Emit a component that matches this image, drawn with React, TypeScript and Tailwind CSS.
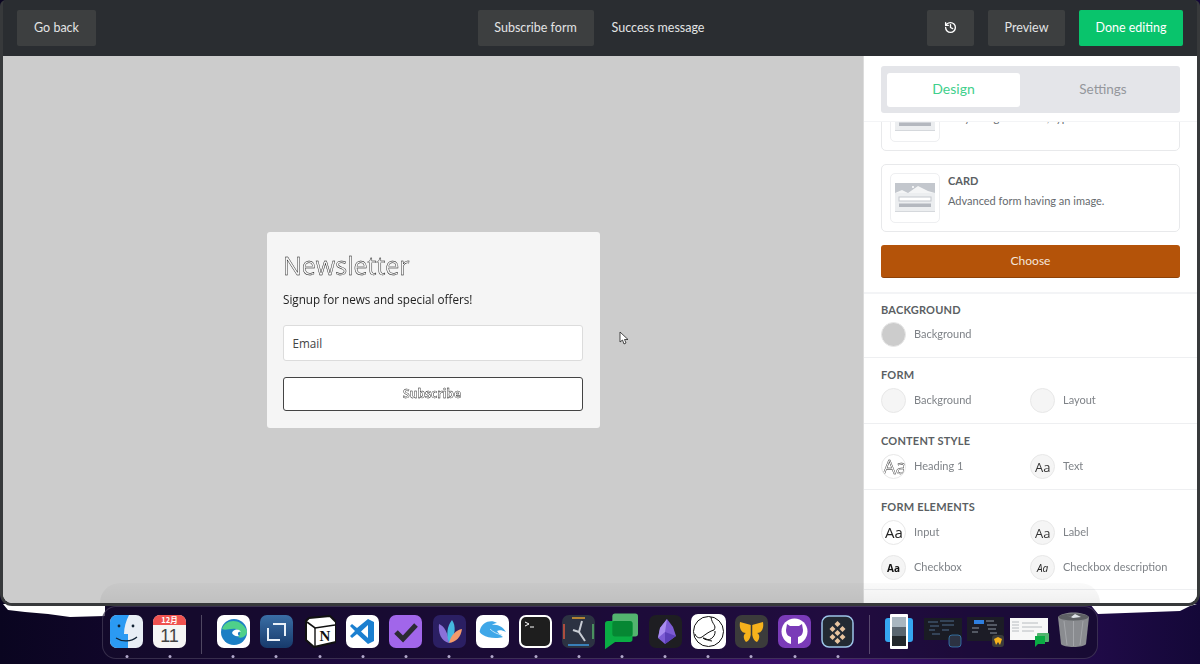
import React from 'react';
import { History } from 'lucide-react';

const SANS = "font-['Lato','Liberation_Sans',sans-serif]";
const OPEN = "font-['Open_Sans','Liberation_Sans',sans-serif]";

const CardThumb: React.FC = () => (
    <div className="w-[50px] h-[50px] shrink-0 rounded-[5px] border border-[#eeeff1] bg-white flex items-center justify-center">
        <svg width="40" height="30" viewBox="0 0 40 30">
            <rect width="40" height="28" fill="#eceef0" />
            <path d="M0 0h40v10H0z" fill="#c3c7cd" />
            <path d="M0 10l7-3 6 3 10-7 10 5 7 2z" fill="#f4f5f6" />
            <circle cx="18" cy="4" r="1" fill="#fff" />
            <rect x="4" y="14" width="32" height="4" fill="#fff" stroke="#c3c7cd" />
            <rect x="4" y="20.5" width="32" height="3.5" fill="#b4b8bf" />
            <rect y="28" width="40" height="1" fill="#d5d8dc" />
        </svg>
    </div>
);

const Swatch: React.FC<{ label: string; className?: string; children?: React.ReactNode }> = ({ label, className, children }) => (
    <div className="flex items-start gap-2 h-[25px]">
        <div className={`w-[25px] h-[25px] shrink-0 rounded-full border border-[#e8e8e8] flex items-center justify-center overflow-hidden ${className ?? 'bg-[#f5f5f5]'}`}>
            {children}
        </div>
        <span className="text-[11px] leading-[23px] text-[#7f8388] whitespace-nowrap [will-change:transform]">{label}</span>
    </div>
);

const Aa: React.FC<{ className: string }> = ({ className }) => (
    <span className={`${OPEN} [will-change:transform] ${className}`}>Aa</span>
);

const Section: React.FC<{ title: string; className?: string; children: React.ReactNode }> = ({ title, className, children }) => (
    <section className={`shrink-0 border-b border-[#eeeff1] px-[17px] ${className ?? 'h-[66px] pt-[10px]'}`}>
        <h3 className="text-[11px] leading-[14px] font-bold text-[#5b5f63] tracking-[0.2px] mb-[6px]">{title}</h3>
        {children}
    </section>
);

const SidePanel: React.FC = () => (
    <aside className={`w-[333px] shrink-0 bg-white flex flex-col overflow-hidden ${SANS}`}>
        <div className="relative z-10 h-[66px] shrink-0 bg-white px-[17px] pt-[10px] border-b border-[#f3f4f6]">
            <div className="h-[47px] rounded-[3px] bg-[#e4e5e9] p-[6px] flex">
                <button className="w-[133px] h-[34px] mt-[1px] pb-[3px] rounded-[3px] bg-white text-[14px] text-[#3fd08c]">Design</button>
                <button className="flex-1 h-[34px] mt-[1px] pb-[2px] pl-[12px] text-[13.5px] text-[#94979c]">Settings</button>
            </div>
        </div>

        <div className="flex-1 overflow-hidden">
            {/* scrolled part of the layout picker */}
            <div className="px-[17px] pb-[14px] border-b-2 border-[#f3f4f6]">
                <div className="-mt-[39px] h-[68px] rounded-[5px] border border-[#e8e9eb] p-[8px] flex gap-2">
                    <CardThumb />
                    <div className="pt-[19px] text-[11px] leading-[14px] text-[#666a6e]">Very straightforward, type.</div>
                </div>
                <div className="mt-[13px] h-[68px] rounded-[5px] border border-[#e8e9eb] p-[8px] flex gap-2">
                    <CardThumb />
                    <div>
                        <div className="text-[11px] font-bold leading-[14px] text-[#5b5f63] mt-px">CARD</div>
                        <div className="text-[11px] leading-[14px] mt-[6px] text-[#666a6e]">Advanced form having an image.</div>
                    </div>
                </div>
                <button className="mt-[13px] w-full h-[33px] rounded-[3px] bg-[#b45309] border-b border-[#8f4207] text-[12px] text-[#f4e6da]">Choose</button>
            </div>

            <Section title="BACKGROUND" className="h-[64px] pt-[9px] [&>h3]:mb-[5px]">
                <Swatch label="Background" className="bg-[#cccccc]" />
            </Section>
            <Section title="FORM">
                <div className="grid grid-cols-[149px_1fr]">
                    <Swatch label="Background" />
                    <Swatch label="Layout" />
                </div>
            </Section>
            <Section title="CONTENT STYLE">
                <div className="grid grid-cols-[149px_1fr]">
                    <Swatch label="Heading 1" className="bg-white">
                        <Aa className="text-[20px] font-normal text-white [-webkit-text-stroke:0.4px_#111] ml-[3px] whitespace-nowrap" />
                    </Swatch>
                    <Swatch label="Text"><Aa className="text-[13px] text-[#333] mt-[2px]" /></Swatch>
                </div>
            </Section>
            <Section title="FORM ELEMENTS" className="pt-[10px] pb-[9px]">
                <div className="grid grid-cols-[149px_1fr] gap-y-[10px]">
                    <Swatch label="Input" className="bg-white"><Aa className="text-[15px] font-normal text-[#222]" /></Swatch>
                    <Swatch label="Label"><Aa className="text-[13px] text-[#333] mt-[2px]" /></Swatch>
                    <Swatch label="Checkbox"><Aa className="text-[10px] font-bold text-[#111] mt-px" /></Swatch>
                    <Swatch label="Checkbox description"><Aa className="text-[10px] italic text-[#222] mt-px" /></Swatch>
                </div>
            </Section>
        </div>
    </aside>
);

const Icon: React.FC<{ children: React.ReactNode }> = ({ children }) => (
    <svg width="33" height="33" viewBox="0 0 33 33">{children}</svg>
);

const dockApps: React.ReactNode[] = [
    <Icon><rect width="33" height="33" rx="7" fill="#e8eef5" /><path d="M0 7a7 7 0 017-7h12c-3 6-5 12-5 19h4v14H7a7 7 0 01-7-7z" fill="#2b9af3" /><circle cx="9" cy="11" r="1.4" fill="#123" /><circle cx="23" cy="11" r="1.4" fill="#123" /><path d="M6 23c6 4 15 4 21-1" fill="none" stroke="#123" strokeWidth="1.2" /></Icon>,
    <Icon><rect width="33" height="33" rx="7" fill="#f5f5f4" /><path d="M0 10V7a7 7 0 017-7h19a7 7 0 017 7v3z" fill="#f0524f" /><text x="16.5" y="8" textAnchor="middle" fontSize="7.5" fontWeight="700" fill="#fff" fontFamily="Noto Sans CJK SC, sans-serif">12月</text><text x="16.5" y="27" textAnchor="middle" fontSize="18" fill="#444" fontFamily="Liberation Sans, sans-serif">11</text></Icon>,
    'sep',
    <Icon><rect width="33" height="33" rx="7" fill="#fff" /><circle cx="17" cy="17" r="13" fill="#1b7fc4" /><path d="M5 14C8 4 24 2 30 16c0 5-5 8-9 6 3-2 3-7-2-8-6-1-10 2-14 0z" fill="#4fd08a" /><path d="M15 18c1-4 7-5 9-1-3-1-4 2-2 4-3 1-6-1-7-3z" fill="#fff" /></Icon>,
    <Icon><defs><linearGradient id="nx" x1="0" y1="0" x2="0" y2="1"><stop offset="0" stopColor="#3a6ea5" /><stop offset="1" stopColor="#173a6b" /></linearGradient></defs><rect width="33" height="33" rx="7" fill="url(#nx)" /><path d="M8 13v12h12" fill="none" stroke="#e8f0f8" strokeWidth="2" /><path d="M13 9h12v12" fill="none" stroke="#e8f0f8" strokeWidth="2" /></Icon>,
    <Icon><path d="M6 3l21-2 6 6v20l-22 5-8-7V6z" fill="#fff" stroke="#111" strokeWidth="2" /><path d="M4 7l8 6 20-3" fill="none" stroke="#111" strokeWidth="1.6" /><path d="M12 13v18" stroke="#111" strokeWidth="1.4" /><text x="22" y="26" textAnchor="middle" fontSize="15" fontWeight="700" fill="#111" fontFamily="Liberation Serif, serif">N</text></Icon>,
    <Icon><rect width="33" height="33" rx="7" fill="#fff" /><path d="M22 4l6 3v19l-6 3-11-10-5 4-2-2 5-5-5-5 2-2 5 4z" fill="#1b7fd0" /><path d="M22 10l-7 6.500 7 6.500z" fill="#fff" /></Icon>,
    <Icon><rect width="33" height="33" rx="7" fill="#a166ea" /><path d="M7 17l7 7L27 10" fill="none" stroke="#2b2b33" strokeWidth="5" /></Icon>,
    <Icon><rect width="33" height="33" rx="7" fill="#2b1f63" /><path d="M16 28C8 26 5 18 6 9c5 2 9 8 10 19z" fill="#8a70d8" /><path d="M16 28c-3-8-2-17 3-23 4 5 4 16-3 23z" fill="#45b8e0" /><path d="M16 28c2-8 7-13 13-14-1 8-6 13-13 14z" fill="#f49a6c" /></Icon>,
    <Icon><rect width="33" height="33" rx="7" fill="#fff" /><path d="M4 15C6 7 15 4 21 8c-2 0-4 1-5 2 6-1 11 2 14 7-4-2-7-2-9-1 2 3 4 5 6 6-6 2-16 1-20-2-3-2-4-3-3-5z" fill="#3fa7e8" /><path d="M14 14c3 3 7 5 12 6" stroke="#bfe4fa" fill="none" /></Icon>,
    <Icon><rect x="1" y="1" width="31" height="31" rx="6" fill="#1e1e1e" stroke="#fff" strokeWidth="2" /><path d="M6 7l4 2-4 2" fill="none" stroke="#fff" strokeWidth="1" /><path d="M11 12h4" stroke="#fff" strokeWidth="1" /></Icon>,
    <Icon><rect width="33" height="33" rx="7" fill="#2c3242" /><path d="M10 3h13" stroke="#e0a030" strokeWidth="1.5" /><path d="M2 9v15" stroke="#d9573f" strokeWidth="1.5" /><path d="M31 9v15" stroke="#55b06a" strokeWidth="1.500" /><path d="M6 30h21" stroke="#3e9ae0" strokeWidth="1.5" /><path d="M20 6l-3 11 6 9M17 17l-6-2" fill="none" stroke="#c8ccd4" strokeWidth="2" /></Icon>,
    <svg width="36" height="38" viewBox="0 0 36 38" className="-mt-[3px]"><rect x="8" y="0" width="28" height="25" rx="3" fill="#53b46f" /><path d="M3 8h24a3 3 0 013 3v17a3 3 0 01-3 3H11l-11 8V11a3 3 0 013-3z" fill="#0aac44" /><rect x="8" y="8" width="22" height="17" rx="3" fill="#068733" /></svg>,
    <Icon><rect width="33" height="33" rx="7" fill="#1e1e22" /><path d="M18 4l6 8 3 9-11 8-7-6 2-10z" fill="#7c5bd4" /><path d="M18 4l-2 13-7 6 2-10z" fill="#a98df0" /><path d="M16 17l11 4-11 8z" fill="#5c3fb8" /></Icon>,
    <svg width="35" height="35" viewBox="0 0 35 35" className="-mt-px shrink-0"><rect width="35" height="35" rx="7" fill="#fff" /><circle cx="17.5" cy="17.5" r="15" fill="none" stroke="#111" strokeWidth="1" /><path d="M20 3c1 8 6 8 3 13-4 1-8 4-12 7-3 2-6 0-7-3M24 17c1 6-7 12-12 7 3 0 5 3 9 3" fill="none" stroke="#111" strokeWidth="1" /></svg>,
    <Icon><rect width="33" height="33" rx="7" fill="#3b3b3b" /><path d="M16 10l-11-3c-1 6 1 11 6 11-3 1-3 6 0 9 3-1 4-4 5-7z" fill="#f6b21c" /><path d="M17 10l11-3c1 6-1 11-6 11 3 1 3 6 0 9-3-1-4-4-5-7z" fill="#f6b21c" /><path d="M16.500 6v20" stroke="#3b3b3b" strokeWidth="1.5" /></Icon>,
    <Icon><rect width="33" height="33" rx="7" fill="#7a3bb8" /><circle cx="16.5" cy="16.5" r="13" fill="#fff" /><path d="M9 9l3 2h9l3-2 1 6c0 5-3 7-6 7h-5c-3 0-6-2-6-7z" fill="#7a3bb8" /><path d="M13 22h7v8h-7z" fill="#7a3bb8" /></Icon>,
    <Icon><rect x="1" y="1" width="31" height="31" rx="7" fill="#232a33" stroke="#9cc4e8" strokeWidth="1.500" /><g fill="#e8c4a0"><path d="M16.500 6l3 3-3 3-3-3z" /><path d="M11.500 11l3 3-3 3-3-3z" /><path d="M21.500 11l3 3-3 3-3-3z" /><path d="M16.500 15l3 3-3 3-3-3z" /><path d="M11.500 19l3 3-3 3-3-3z" /><path d="M21.500 19l3 3-3 3-3-3z" /><path d="M16.500 23l3 3-3 3-3-3z" /></g></Icon>,
    'sep',
];

const DockMinis: React.FC = () => (
    <div className="flex gap-[5px] shrink-0">
        <svg width="28" height="35" viewBox="0 0 28 35" className="shrink-0 -mt-px mr-[6px]">
            <rect x="0" y="4" width="28" height="24" rx="3" fill="#35a7f0" />
            <rect x="5" y="0" width="18" height="35" rx="1" fill="#fff" />
            <rect x="7" y="3" width="14" height="29" fill="#5a6670" />
            <rect x="7" y="3" width="14" height="10" fill="#a8b6c0" />
            <rect x="7" y="22" width="14" height="10" fill="#23282c" />
        </svg>
        <svg width="38" height="33" viewBox="0 0 38 33" className="shrink-0">
            <rect y="3" width="38" height="22" fill="#1a1c24" />
            <path d="M4 7h10M16 6h14M6 11h9M18 10h12M5 15h6M8 19h8M18 15h7" stroke="#4f6b8a" strokeWidth="1" />
            <rect x="25" y="20" width="12" height="12" rx="3" fill="#2c3242" stroke="#3e9ae0" strokeWidth="0.6" />
        </svg>
        <svg width="38" height="33" viewBox="0 0 38 33" className="shrink-0">
            <rect y="2" width="37" height="24" fill="#1c1c26" />
            <rect x="7" y="5" width="10" height="4" fill="#2f7fe0" />
            <path d="M19 6h8M20 10h10M21 14h8M23 18h7M5 13h7M5 17h6" stroke="#8a93a0" strokeWidth="1" />
            <rect x="25" y="20" width="12" height="12" rx="3" fill="#3b3b3b" />
            <path d="M31 22l-4 2 2 6 2-3 2 3 2-6z" fill="#f6b21c" />
        </svg>
        <svg width="39" height="33" viewBox="0 0 39 33" className="shrink-0">
            <rect y="3" width="38" height="22" fill="#f7f7f7" />
            <path d="M2 7h7M2 10h7M2 13h7M2 16h7M12 8h16M12 12h20M12 16h12" stroke="#b8bcc0" strokeWidth="1" />
            <rect x="27" y="18" width="12" height="9" rx="1" fill="#53b46f" />
            <path d="M25 21h10v8h-7l-3 3z" fill="#0aac44" />
        </svg>
    </div>
);

const Dock: React.FC = () => (
    <div className="relative flex justify-center">
        <div className="w-[996px] h-[53px] rounded-[14px] border border-white/15 bg-[#160c2c]/70 flex items-start justify-center pt-[8px] gap-[10.2px]">
            {dockApps.map((app, i) =>
                app === 'sep' ? (
                    <div key={i} className="w-px h-[39px] bg-white/25 mx-[4.5px] shrink-0" />
                ) : (
                    <div key={i} className="relative w-[33px] shrink-0 flex justify-center">
                        {app}
                        <span className="absolute left-1/2 -translate-x-1/2 top-[40px] w-[3px] h-[3px] rounded-full bg-[#b3a9cc]" />
                    </div>
                )
            )}
            <DockMinis />
            <svg width="33" height="37" viewBox="0 0 33 37" className="shrink-0 -mt-[3px] -ml-[2px]">
                <path d="M1 5c5-6 26-6 31 0l-3 27c-2 4-23 4-25 0z" fill="#8a8c90" />
                <ellipse cx="16.500" cy="5" rx="15" ry="3.500" fill="#5e6064" />
                <path d="M9 3l5 2 4-3 6 3-8 1z" fill="#dfe3e8" />
                <path d="M7 9l3 24M16.500 9v25M26 9l-3 24" stroke="#a4a6aa" strokeWidth="1" />
            </svg>
        </div>
    </div>
);

export default function App() {
    return (
        <div className={`relative w-[1200px] h-[664px] overflow-hidden bg-gradient-to-r from-[#0a0520] via-[#3d0f6e] via-70% to-[#140838] ${SANS}`}>
            {/* white slivers left under the window by the recording */}
            <svg className="absolute left-0 top-[600px]" width="1200" height="20" viewBox="0 0 1200 20">
                <path d="M3 4l5 6 17 2 23 2 22 3 35-1V4z" fill="#fff" />
                <path d="M1090 4l8 10 82-3 10-5 7-2z" fill="#fff" />
            </svg>

            <div className="relative h-[606px] flex flex-col overflow-hidden rounded-b-[12px] rounded-t-[6px] border-x-[3px] border-b-[3px] border-[#37393b] bg-[#2a2d31]">
                <header className="h-[56px] shrink-0 bg-[#2a2d31] flex items-start pt-[10px] px-[14px] text-[12.5px] text-[#e3e4e5]">
                    <div className="flex-1">
                        <button className="w-[79px] h-[36px] rounded-[2px] bg-[#3d3f40]">Go back</button>
                    </div>
                    <div className="flex items-center">
                        <button className="w-[116px] h-[36px] rounded-[2px] bg-[#3d3f40]">Subscribe form</button>
                        <button className="w-[129px] h-[36px]">Success message</button>
                    </div>
                    <div className="flex-1 flex justify-end gap-[14px]">
                        <button className="w-[47px] h-[36px] rounded-[2px] bg-[#3d3f40] flex items-center justify-center">
                            <History size={13} strokeWidth={2.5} className="text-white -mt-px" />
                        </button>
                        <button className="w-[77px] h-[36px] rounded-[2px] bg-[#3d3f40]">Preview</button>
                        <button className="w-[104px] h-[36px] rounded-[2px] bg-[#09c46c] text-white">Done editing</button>
                    </div>
                </header>

                <div className="flex-1 min-h-0 flex bg-white">
                    <main className={`flex-1 bg-[#cccccc] flex items-center justify-center border-r border-[#dcdcdc] ${OPEN}`}>
                        <div className="w-[333px] h-[196px] rounded-[3px] bg-[#f5f5f5] pl-4 pr-[17px] pt-[14px]">
                            <h1 className="text-[25px] leading-[38px] font-normal text-[#f5f5f5] [-webkit-text-stroke:0.4px_#000] [will-change:transform]">Newsletter</h1>
                            <p className="text-[11.7px] leading-[20px] text-[#222] mt-[5px] [will-change:transform]">Signup for news and special offers!</p>
                            <div className="mt-[16px] h-[36px] rounded-[3px] border border-[#dcdcdc] bg-white pl-[9px] text-[11.7px] leading-[34px] text-[#444]">Email</div>
                            <button className="mt-[16px] w-full h-[34px] rounded-[3px] border border-[#444] bg-white text-[12px] font-bold text-white [-webkit-text-stroke:0.4px_#000]">
                                <span className="inline-block [will-change:transform]">Subscribe</span>
                            </button>
                        </div>
                    </main>
                    <SidePanel />
                </div>
            </div>

            {/* dock reflection lying over the window */}
            <div className="absolute left-[100px] top-[583px] w-[1000px] h-[20px] rounded-t-[30px] bg-gradient-to-b from-black/2 to-black/6" />

            {/* mouse pointer */}
            <svg className="absolute left-[619px] top-[331px]" width="10" height="14" viewBox="0 0 10 14">
                <path d="M1 1v10l2.500-2 1.500 4 2-1-1.500-3.500H9z" fill="#fff" stroke="#222" strokeWidth="0.8" />
            </svg>

            <Dock />
        </div>
    );
}
